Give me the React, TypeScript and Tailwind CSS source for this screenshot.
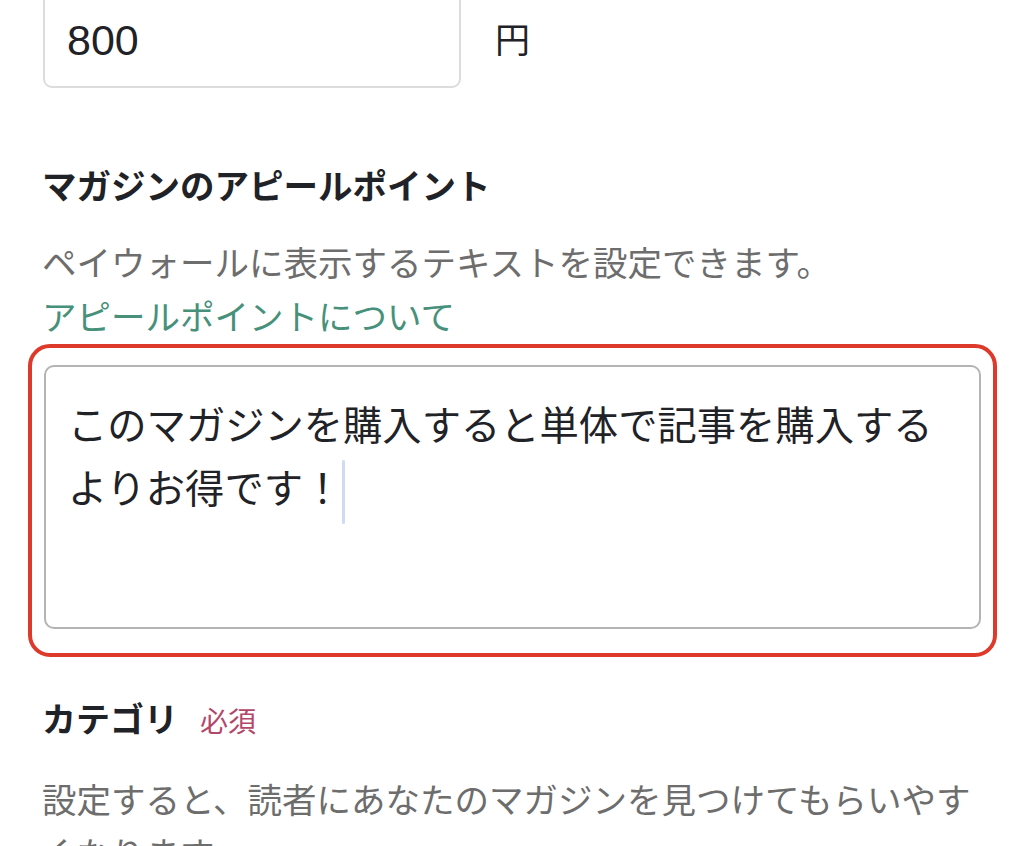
export default function App() {
  return (
    <div
      className="min-h-[846px] overflow-hidden bg-white pl-[42px] pr-[43px] text-[#1f2226]"
      style={{ fontFamily: '"Noto Sans CJK JP", "Noto Sans", sans-serif' }}
    >
      {/* price */}
      <div className="mt-[-12px] flex items-center">
        <div className="ml-[1px] flex h-[100px] w-[418px] items-end rounded-[9px] border-2 border-[#dcdcdc] px-[22px] pb-[24px]">
          <span className="text-[43px] leading-none font-['Liberation_Sans',sans-serif]">800</span>
        </div>
        <span className="ml-[34px] text-[35px]">円</span>
      </div>

      {/* appeal point */}
      <h2 className="mt-[76px] text-[34.5px] leading-[40px] font-bold">マガジンのアピールポイント</h2>
      <p className="mt-[30px] text-[34.5px] leading-[54px] text-[#6d6d6d]">
        ペイウォールに表示するテキストを設定できます。
        <br />
        <a className="text-[#47917b]">アピールポイントについて</a>
      </p>

      <div className="mr-[-16px] ml-[-14px] mt-[2px] rounded-[22px] border-4 border-[#dd3a2c] px-[12px] pt-[17px] pb-[24px]">
        <div className="h-[264px] rounded-[10px] border-[2.5px] border-[#b4b4b4] pl-[22px] pt-[24px]">
          <p className="text-[39.3px] leading-[63px]">
            このマガジンを購入すると単体で記事を購入する
            <br />
            よりお得です！
            <span className="ml-[0px] inline-block h-[64px] w-[3px] rounded-full bg-[#cfdaf4] align-middle" />
          </p>
        </div>
      </div>

      {/* category */}
      <div className="mt-[39px] flex items-baseline">
        <h2 className="text-[34px] leading-[44px] font-bold">カテゴリ</h2>
        <span className="ml-[22px] text-[28px] text-[#b2476a]">必須</span>
      </div>
      <p className="mt-[30px] text-[34.5px] leading-[54px] text-[#6d6d6d]">
        設定すると、読者にあなたのマガジンを見つけてもらいやすくなります。
      </p>
    </div>
  );
}
